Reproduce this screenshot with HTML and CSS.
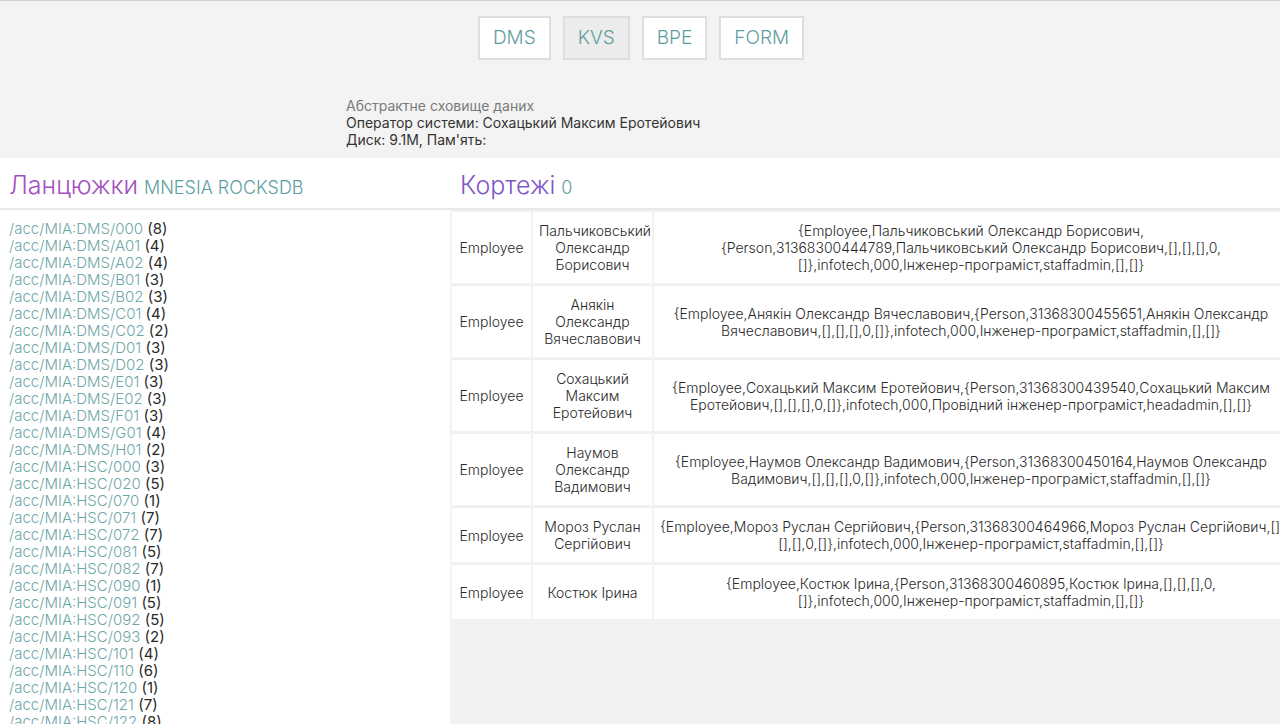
FILE: index.html
```html
<!DOCTYPE html>
<html lang="uk">
<head>
<meta charset="utf-8">
<title>KVS</title>
<link rel="stylesheet" href="styles.css">
</head>
<body>
<div class="top">
  <nav class="nav">
    <a class="btn">DMS</a>
    <a class="btn active">KVS</a>
    <a class="btn">BPE</a>
    <a class="btn">FORM</a>
  </nav>
  <div class="info">
    <div class="muted">Абстрактне сховище даних</div>
    <div>Оператор системи: Сохацький Максим Еротейович</div>
    <div>Диск: 9.1M, Пам'ять:</div>
  </div>
</div>
<div class="main">
  <section class="left">
    <h2 class="head"><span class="title chains">Ланцюжки</span> <span class="sub">MNESIA ROCKSDB</span></h2>
    <ul class="list">
      <li><a>/acc/MIA:DMS/000</a> (8)</li>
      <li><a>/acc/MIA:DMS/A01</a> (4)</li>
      <li><a>/acc/MIA:DMS/A02</a> (4)</li>
      <li><a>/acc/MIA:DMS/B01</a> (3)</li>
      <li><a>/acc/MIA:DMS/B02</a> (3)</li>
      <li><a>/acc/MIA:DMS/C01</a> (4)</li>
      <li><a>/acc/MIA:DMS/C02</a> (2)</li>
      <li><a>/acc/MIA:DMS/D01</a> (3)</li>
      <li><a>/acc/MIA:DMS/D02</a> (3)</li>
      <li><a>/acc/MIA:DMS/E01</a> (3)</li>
      <li><a>/acc/MIA:DMS/E02</a> (3)</li>
      <li><a>/acc/MIA:DMS/F01</a> (3)</li>
      <li><a>/acc/MIA:DMS/G01</a> (4)</li>
      <li><a>/acc/MIA:DMS/H01</a> (2)</li>
      <li><a>/acc/MIA:HSC/000</a> (3)</li>
      <li><a>/acc/MIA:HSC/020</a> (5)</li>
      <li><a>/acc/MIA:HSC/070</a> (1)</li>
      <li><a>/acc/MIA:HSC/071</a> (7)</li>
      <li><a>/acc/MIA:HSC/072</a> (7)</li>
      <li><a>/acc/MIA:HSC/081</a> (5)</li>
      <li><a>/acc/MIA:HSC/082</a> (7)</li>
      <li><a>/acc/MIA:HSC/090</a> (1)</li>
      <li><a>/acc/MIA:HSC/091</a> (5)</li>
      <li><a>/acc/MIA:HSC/092</a> (5)</li>
      <li><a>/acc/MIA:HSC/093</a> (2)</li>
      <li><a>/acc/MIA:HSC/101</a> (4)</li>
      <li><a>/acc/MIA:HSC/110</a> (6)</li>
      <li><a>/acc/MIA:HSC/120</a> (1)</li>
      <li><a>/acc/MIA:HSC/121</a> (7)</li>
      <li><a>/acc/MIA:HSC/122</a> (8)</li>
    </ul>
  </section>
  <section class="right">
    <h2 class="head"><span class="title tuples">Кортежі</span> <span class="sub">0</span></h2>
    <div class="tablewrap">
      <table class="tbl">
        <colgroup><col class="c1"><col class="c2"><col class="c3"></colgroup>
        <tr><td>Employee</td><td>Пальчиковський Олександр Борисович</td><td class="rec">{Employee,Пальчиковський Олександр Борисович,<br>{Person,31368300444789,Пальчиковський Олександр Борисович,[],[],[],0,<br>[]},infotech,000,Інженер-програміст,staffadmin,[],[]}</td></tr>
        <tr><td>Employee</td><td>Анякін Олександр Вячеславович</td><td class="rec">{Employee,Анякін Олександр Вячеславович,{Person,31368300455651,Анякін Олександр<br>Вячеславович,[],[],[],0,[]},infotech,000,Інженер-програміст,staffadmin,[],[]}</td></tr>
        <tr><td>Employee</td><td>Сохацький Максим Еротейович</td><td class="rec">{Employee,Сохацький Максим Еротейович,{Person,31368300439540,Сохацький Максим<br>Еротейович,[],[],[],0,[]},infotech,000,Провідний інженер-програміст,headadmin,[],[]}</td></tr>
        <tr><td>Employee</td><td>Наумов Олександр Вадимович</td><td class="rec">{Employee,Наумов Олександр Вадимович,{Person,31368300450164,Наумов Олександр<br>Вадимович,[],[],[],0,[]},infotech,000,Інженер-програміст,staffadmin,[],[]}</td></tr>
        <tr><td>Employee</td><td>Мороз Руслан Сергійович</td><td class="rec">{Employee,Мороз Руслан Сергійович,{Person,31368300464966,Мороз Руслан Сергійович,[],<br>[],[],0,[]},infotech,000,Інженер-програміст,staffadmin,[],[]}</td></tr>
        <tr><td>Employee</td><td>Костюк Ірина</td><td class="rec">{Employee,Костюк Ірина,{Person,31368300460895,Костюк Ірина,[],[],[],0,<br>[]},infotech,000,Інженер-програміст,staffadmin,[],[]}</td></tr>
      </table>
    </div>
  </section>
</div>
</body>
</html>
```
FILE: styles.css
```css
html, body {
  margin: 0;
  padding: 0;
}
body {
  font-family: Inter, "Noto Sans", sans-serif;
  font-size: 14px;
  line-height: 17px;
  color: #222;
  background: #f2f2f2;
  overflow: hidden;
  height: 724px;
}
.top {
  background: #f3f3f3;
  border-top: 1px solid #cfcfcf;
  height: 158px;
  box-sizing: border-box;
}
.nav {
  display: flex;
  justify-content: center;
  gap: 12px;
  padding-top: 15px;
  padding-left: 2px;
}
.btn {
  display: block;
  box-sizing: border-box;
  height: 44px;
  padding: 0 13px;
  border: 2px solid #dedede;
  background: #fff;
  color: #5f9ea0;
  font-size: 19px;
  line-height: 40px;
  font-weight: 300;
}
.btn.active {
  background: #ececec;
}
.info {
  margin: 37px 0 0 346px;
  font-size: 14px;
  line-height: 17px;
  color: #333;
}
.info .muted {
  color: #7a7a7a;
}
.main {
  display: grid;
  grid-template-columns: 450px 1fr;
  height: 566px;
}
.head {
  margin: 0;
  height: 52px;
  box-sizing: border-box;
  background: #fff;
  border-bottom: 2px solid #e9e9ed;
  font-weight: 400;
  padding: 12px 0 0 9px;
  white-space: nowrap;
}
.title {
  font-size: 25px;
  font-weight: 300;
  line-height: 30px;
}
.chains { color: #a44fbf; }
.tuples { color: #8057c8; }
.sub {
  color: #5f9ea0;
  font-size: 18px;
  font-weight: 300;
}
.right .head {
  padding-left: 10px;
}
.left {
  background: #fff;
}
.list {
  list-style: none;
  margin: 0;
  padding: 10px 0 0 9px;
  font-size: 15px;
  line-height: 17px;
  color: #2a2a2a;
}
.list a {
  color: #6fa7a8;
  font-weight: 300;
}
.right {
  background: #f2f2f2;
  overflow: hidden;
}
.tablewrap {
  width: 840px;
}
.tbl {
  border-collapse: separate;
  border-spacing: 2px;
  table-layout: fixed;
  width: 838px;
  font-size: 14px;
  line-height: 17px;
}
.c1 { width: 79px; }
.c2 { width: 119px; }
.c3 { width: 634px; }
.tbl td {
  background: #fff;
  text-align: center;
  vertical-align: middle;
  padding: 10px 6px;
  font-weight: 300;
  color: #2a2a2a;
}
.tbl td.rec {
  white-space: nowrap;
}
.tbl tr + tr td {
  border-top: 1px solid #eee;
}
```
